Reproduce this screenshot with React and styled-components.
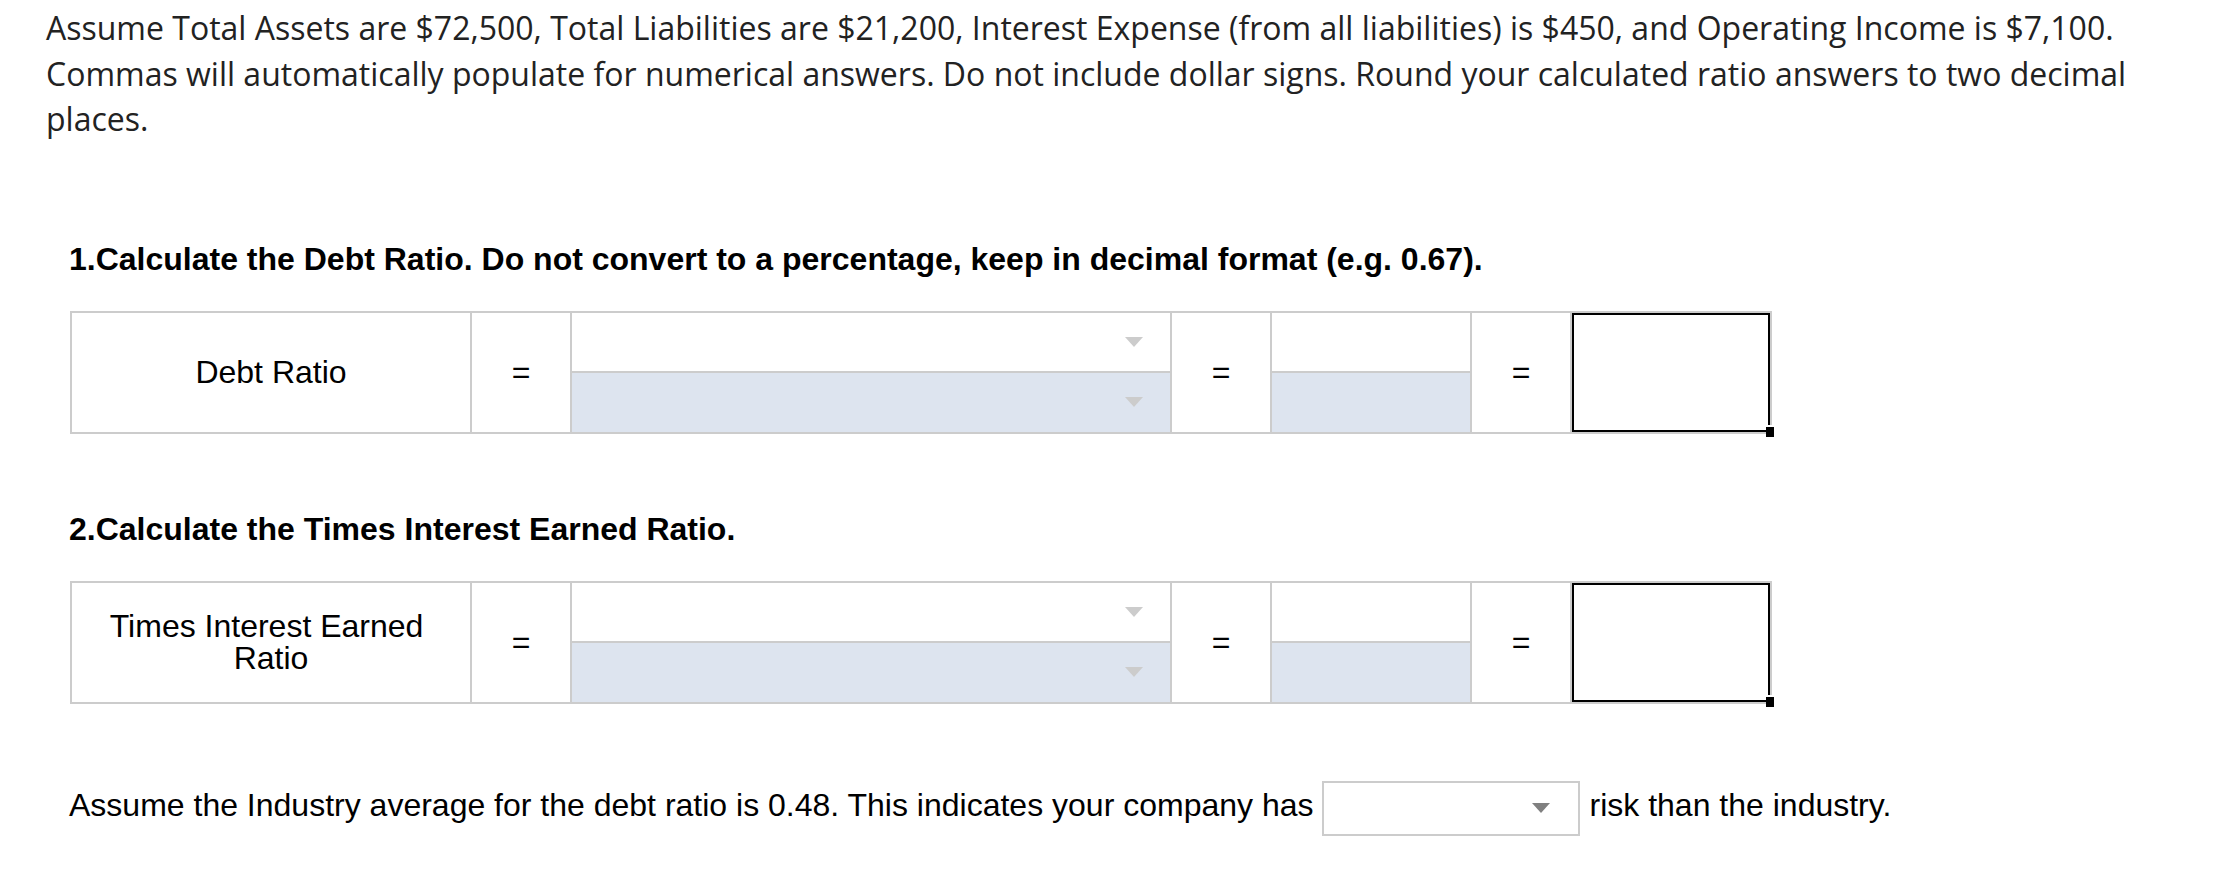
import React from 'react';
import styled, { createGlobalStyle } from 'styled-components';

const GlobalStyle = createGlobalStyle`
  html, body { margin: 0; padding: 0; background: #fff; }
  body { font-family: "Liberation Sans", Arial, sans-serif; color: #000; }
`;

const Page = styled.div`
  padding: 5px 46px 0 46px;
`;

const Intro = styled.p`
  margin: 0;
  font-family: "Open Sans", sans-serif;
  font-size: 32px;
  line-height: 45.5px;
  color: #222;
`;

const Section = styled.section`
  padding-left: 23px;
  margin-top: ${(p) => p.$top}px;
`;

const Heading = styled.h3`
  margin: 0;
  font-family: "Liberation Sans", Arial, sans-serif;
  font-weight: bold;
  font-size: 32px;
  line-height: 37px;
  color: #000;
`;

const Table = styled.div`
  display: flex;
  width: max-content;
  margin-top: 33px;
  margin-left: 1px;
  border-top: 2px solid #ccc;
  border-left: 2px solid #ccc;
`;

const Cell = styled.div`
  box-sizing: border-box;
  position: relative;
  width: ${(p) => p.$w}px;
  height: 121px;
  border-right: 2px solid #ccc;
  border-bottom: 2px solid #ccc;
  display: flex;
  align-items: center;
  justify-content: center;
  text-align: center;
  white-space: ${(p) => (p.$pad ? 'break-spaces' : 'normal')};
  padding: 0 ${(p) => (p.$pad ? 12 : 0)}px;
  font-family: "Liberation Sans", Arial, sans-serif;
  font-size: 32px;
  line-height: 32px;
  color: #000;
`;

const Split = styled.div`
  box-sizing: border-box;
  width: ${(p) => p.$w}px;
  height: 121px;
  display: flex;
  flex-direction: column;
  border-right: 2px solid #ccc;
  border-bottom: 2px solid #ccc;
`;

const Half = styled.div`
  flex: 1;
  display: flex;
  align-items: center;
  justify-content: flex-end;
  padding-right: 27px;
  background: ${(p) => (p.$shade ? '#dde4ef' : '#fff')};
  & + & {
    border-top: 2px solid #ccc;
  }
`;

const Caret = styled.span`
  width: 0;
  height: 0;
  border-left: 9px solid transparent;
  border-right: 9px solid transparent;
  border-top: 10px solid ${(p) => p.$color || '#cccccc'};
`;

const AnswerBox = styled.div`
  box-sizing: border-box;
  width: 100%;
  height: 100%;
  border: 2px solid #000;
  background: #fff;
`;

const Handle = styled.span`
  position: absolute;
  right: -4px;
  bottom: -5px;
  width: 8px;
  height: 10px;
  background: #000;
  box-shadow: 0 -2px 0 #fff;
`;

const Sentence = styled.div`
  display: flex;
  align-items: center;
  margin-top: 77px;
  font-family: "Liberation Sans", Arial, sans-serif;
  font-size: 32px;
  color: #000;
`;

const Words = styled.span`
  line-height: 37px;
  padding-bottom: 5px;
  white-space: nowrap;
`;

const Dropdown = styled.div`
  box-sizing: border-box;
  width: 258px;
  height: 55px;
  margin: 0 10px 0 8px;
  border: 2px solid #ccc;
  display: flex;
  align-items: center;
  justify-content: flex-end;
  padding-right: 28px;
  background: #fff;
`;

const columns = { label: 400, eq: 100, select: 600, input: 200, answer: 200 };

function RatioTable({ label }) {
  return (
    <Table>
      <Cell $w={columns.label} $pad>{label}</Cell>
      <Cell $w={columns.eq}>=</Cell>
      <Split $w={columns.select}>
        <Half><Caret /></Half>
        <Half $shade><Caret /></Half>
      </Split>
      <Cell $w={columns.eq}>=</Cell>
      <Split $w={columns.input}>
        <Half />
        <Half $shade />
      </Split>
      <Cell $w={columns.eq}>=</Cell>
      <Cell $w={columns.answer}>
        <AnswerBox />
        <Handle />
      </Cell>
    </Table>
  );
}

export default function App() {
  return (
    <>
      <GlobalStyle />
      <Page>
        <Intro>
          Assume Total Assets are $72,500, Total Liabilities are $21,200, Interest Expense (from all liabilities) is $450, and Operating Income is $7,100. Commas will automatically populate for numerical answers. Do not include dollar signs. Round your calculated ratio answers to two decimal places.
        </Intro>
        <Section $top={99}>
          <Heading>1.Calculate the Debt Ratio. Do not convert to a percentage, keep in decimal format (e.g. 0.67).</Heading>
          <RatioTable label="Debt Ratio" />
        </Section>
        <Section $top={77}>
          <Heading>2.Calculate the Times Interest Earned Ratio.</Heading>
          <RatioTable label="Times Interest Earned Ratio" />
        </Section>
        <Section $top={0}>
          <Sentence>
            <Words>Assume the Industry average for the debt ratio is 0.48. This indicates your company has</Words>
            <Dropdown><Caret $color="#808080" /></Dropdown>
            <Words>risk than the industry.</Words>
          </Sentence>
        </Section>
      </Page>
    </>
  );
}
